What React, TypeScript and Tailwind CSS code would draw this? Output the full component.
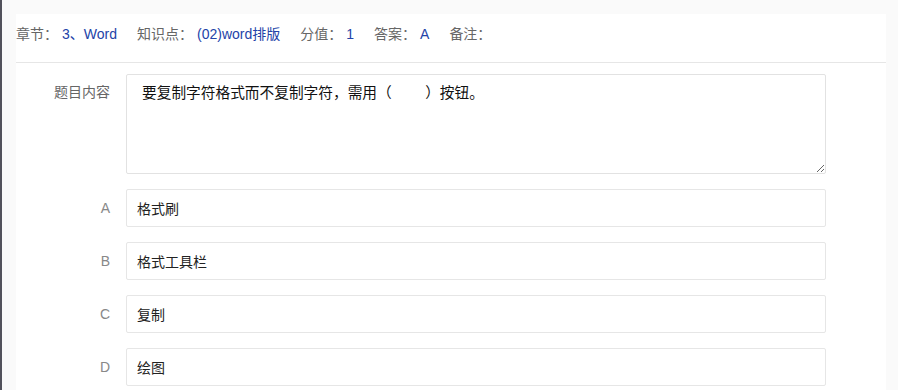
import React from "react";

const meta = [
  { label: "章节：", value: "3、Word" },
  { label: "知识点：", value: "(02)word排版" },
  { label: "分值：", value: "1" },
  { label: "答案：", value: "A" },
  { label: "备注：", value: "" },
];

const options = [
  { key: "A", text: "格式刷" },
  { key: "B", text: "格式工具栏" },
  { key: "C", text: "复制" },
  { key: "D", text: "绘图" },
];

const font = {
  fontFamily: '"Liberation Sans", "Noto Sans CJK SC", sans-serif',
};

export default function App() {
  return (
    <div
      className="flex h-[390px] w-[898px] overflow-hidden bg-[#fafafa]"
      style={font}
    >
      {/* left edge of the outer frame */}
      <div className="w-[2px] shrink-0 bg-[#52525c]" />

      <div className="flex flex-1 pl-[14px] pr-[12px] pt-[14px]">
        <div className="flex-1 bg-white">
          {/* meta row */}
          <div className="flex items-center gap-5 border-b border-[#e6e6e6] pb-[18px] pt-[10px] text-[14px] leading-[20px]">
            {meta.map((m) => (
              <div key={m.label} className="flex items-center">
                <span className="text-[#666]">{m.label}</span>
                {m.value ? (
                  <span className="ml-1 text-[#2343a8]">{m.value}</span>
                ) : null}
              </div>
            ))}
          </div>

          {/* question form */}
          <div className="flex flex-col gap-[15px] pt-[11px]">
            <div className="flex gap-4">
              <label className="w-[94px] shrink-0 pt-[8px] text-right text-[14px] leading-[20px] text-[#666]">
                题目内容
              </label>
              <textarea
                readOnly
                defaultValue="要复制字符格式而不复制字符，需用（　　 ）按钮。"
                className="h-[100px] w-[700px] rounded-[2px] border border-[#e2e2e2] bg-white px-[15px] pt-[7px] text-[14.7px] leading-[22px] text-[#111] outline-none"
                style={font}
              />
            </div>

            {options.map((o) => (
              <div key={o.key} className="flex items-center gap-4">
                <label className="w-[94px] shrink-0 text-right text-[14px] leading-[20px] text-[#888]">
                  {o.key}
                </label>
                <input
                  readOnly
                  defaultValue={o.text}
                  className="h-[38px] w-[700px] rounded-[2px] border border-[#e6e6e6] bg-white px-[10px] text-[14px] text-[#222] outline-none"
                  style={font}
                />
              </div>
            ))}
          </div>
        </div>
      </div>
    </div>
  );
}
